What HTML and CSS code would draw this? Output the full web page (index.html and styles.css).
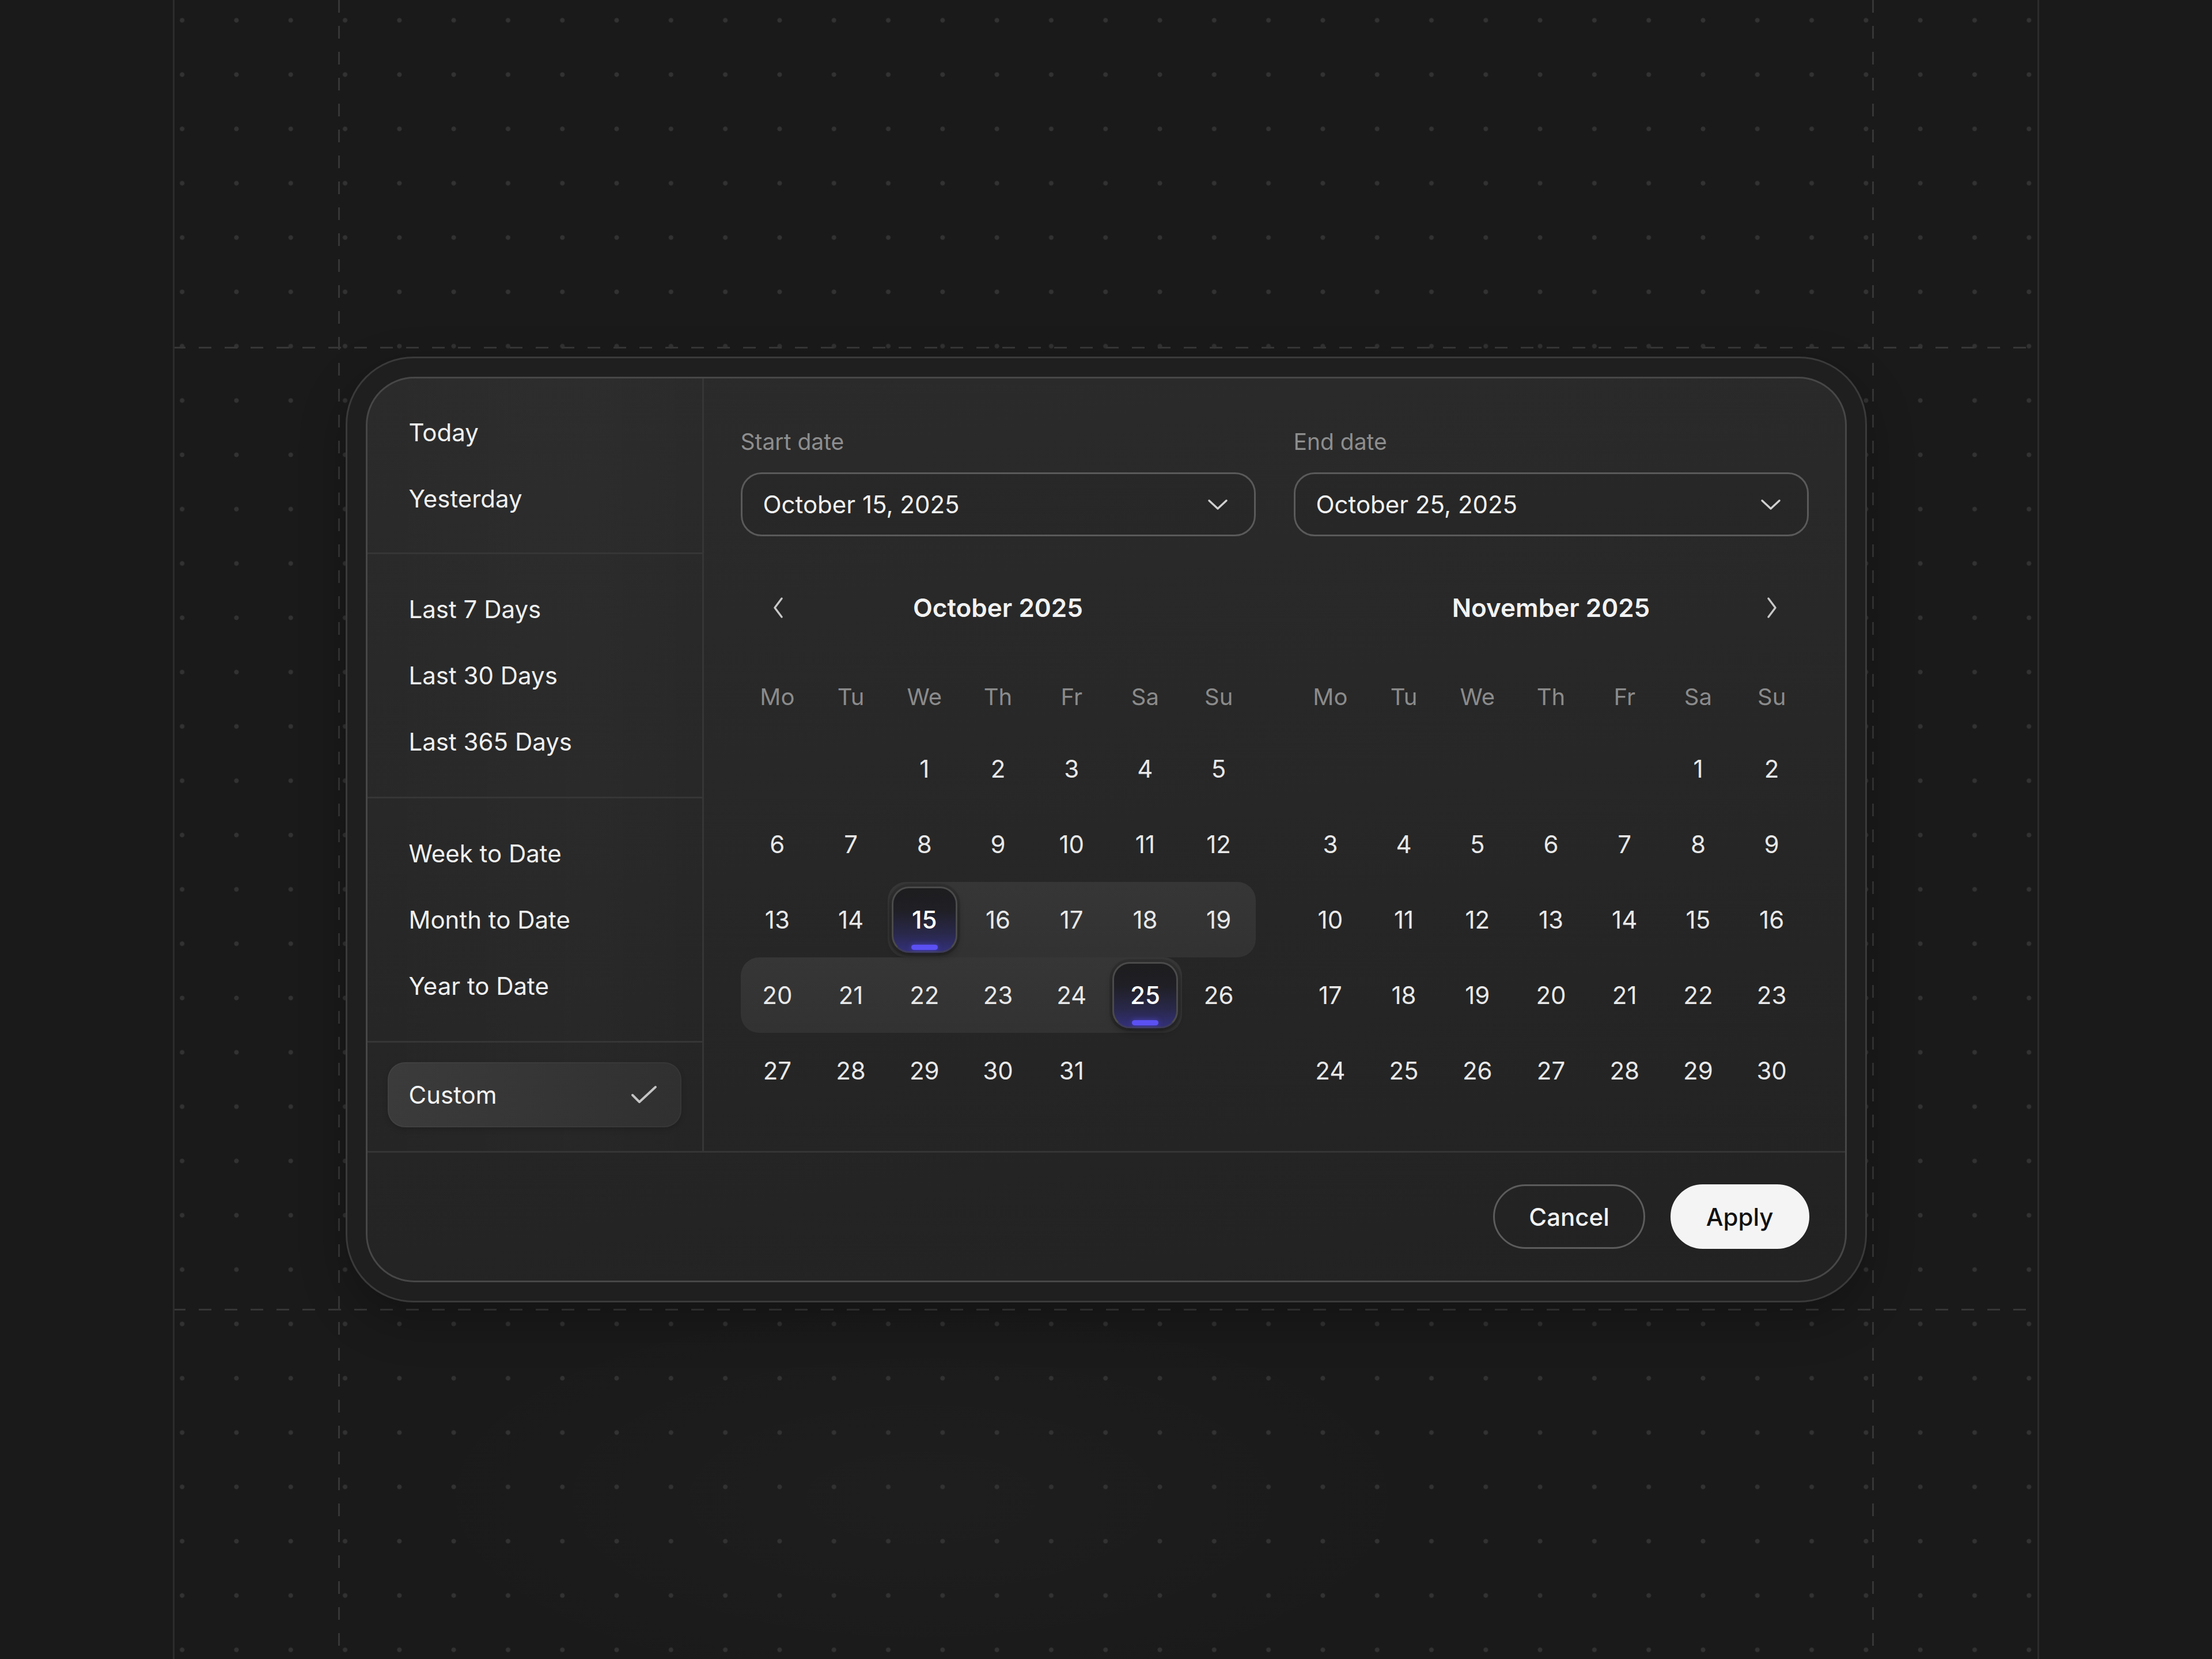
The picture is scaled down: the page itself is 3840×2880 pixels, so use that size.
FILE: index.html
```html
<!DOCTYPE html>
<html lang="en">
<head>
<meta charset="utf-8">
<title>Date range picker</title>
<link rel="stylesheet" href="styles.css">
</head>
<body>
<div class="page">
  <div class="canvas">
    <div class="shell">
      <div class="picker">
        <div class="picker-body">
          <aside class="presets">
            <div class="preset-group first-group">
              <div class="preset">Today</div>
              <div class="preset">Yesterday</div>
            </div>
            <div class="preset-group">
              <div class="preset">Last 7 Days</div>
              <div class="preset">Last 30 Days</div>
              <div class="preset">Last 365 Days</div>
            </div>
            <div class="preset-group">
              <div class="preset">Week to Date</div>
              <div class="preset">Month to Date</div>
              <div class="preset">Year to Date</div>
            </div>
            <div class="preset-group custom-group">
              <div class="custom">
                <span>Custom</span>
                <svg class="check" viewBox="0 0 46 32" width="46" height="32"><path d="M3 17 L15 29 L43 3"/></svg>
              </div>
            </div>
          </aside>

          <section class="range">
            <div class="month-col">
              <div class="field-label">Start date</div>
              <div class="field">
                <span>October 15, 2025</span>
                <svg class="caret" viewBox="0 0 36 20" width="36" height="20"><path d="M3 3 L18 17 L33 3"/></svg>
              </div>
              <div class="cal">
                <div class="cal-head">
                  <span class="nav"><svg viewBox="0 0 24 40" width="24" height="40"><path d="M18 4 L6 20 L18 36"/></svg></span>
                  <div class="cal-title">October 2025</div>
                </div>
                <div class="weekdays">
                  <span>Mo</span><span>Tu</span><span>We</span><span>Th</span><span>Fr</span><span>Sa</span><span>Su</span>
                </div>
                <div class="days">
                  <span class="d"></span><span class="d"></span><span class="d">1</span><span class="d">2</span><span class="d">3</span><span class="d">4</span><span class="d">5</span>
                  <span class="d">6</span><span class="d">7</span><span class="d">8</span><span class="d">9</span><span class="d">10</span><span class="d">11</span><span class="d">12</span>
                  <span class="d">13</span><span class="d">14</span><span class="d in first sel"><b>15<i></i></b></span><span class="d in">16</span><span class="d in">17</span><span class="d in">18</span><span class="d in last">19</span>
                  <span class="d in first">20</span><span class="d in">21</span><span class="d in">22</span><span class="d in">23</span><span class="d in">24</span><span class="d in last sel"><b>25<i></i></b></span><span class="d">26</span>
                  <span class="d">27</span><span class="d">28</span><span class="d">29</span><span class="d">30</span><span class="d">31</span><span class="d"></span><span class="d"></span>
                </div>
              </div>
            </div>

            <div class="month-col">
              <div class="field-label">End date</div>
              <div class="field">
                <span>October 25, 2025</span>
                <svg class="caret" viewBox="0 0 36 20" width="36" height="20"><path d="M3 3 L18 17 L33 3"/></svg>
              </div>
              <div class="cal">
                <div class="cal-head">
                  <div class="cal-title">November 2025</div>
                  <span class="nav next"><svg viewBox="0 0 24 40" width="24" height="40"><path d="M6 4 L18 20 L6 36"/></svg></span>
                </div>
                <div class="weekdays">
                  <span>Mo</span><span>Tu</span><span>We</span><span>Th</span><span>Fr</span><span>Sa</span><span>Su</span>
                </div>
                <div class="days">
                  <span class="d"></span><span class="d"></span><span class="d"></span><span class="d"></span><span class="d"></span><span class="d">1</span><span class="d">2</span>
                  <span class="d">3</span><span class="d">4</span><span class="d">5</span><span class="d">6</span><span class="d">7</span><span class="d">8</span><span class="d">9</span>
                  <span class="d">10</span><span class="d">11</span><span class="d">12</span><span class="d">13</span><span class="d">14</span><span class="d">15</span><span class="d">16</span>
                  <span class="d">17</span><span class="d">18</span><span class="d">19</span><span class="d">20</span><span class="d">21</span><span class="d">22</span><span class="d">23</span>
                  <span class="d">24</span><span class="d">25</span><span class="d">26</span><span class="d">27</span><span class="d">28</span><span class="d">29</span><span class="d">30</span>
                </div>
              </div>
            </div>
          </section>
        </div>

        <footer class="picker-foot">
          <button class="btn ghost">Cancel</button>
          <button class="btn solid">Apply</button>
        </footer>
      </div>
    </div>
  </div>
</div>
</body>
</html>
```

FILE: styles.css
```css
* {
  box-sizing: border-box;
  margin: 0;
  padding: 0;
}

html,
body {
  background: #1a1a1a;
}

body {
  font-family: Inter, "Noto Sans", "Liberation Sans", sans-serif;
  color: #ededed;
  -webkit-font-smoothing: antialiased;
}

.page {
  display: flex;
  justify-content: center;
  min-height: 2880px;
}

/* guide canvas between the two solid rules */
.canvas {
  width: 3240px;
  min-height: 2880px;
  border-left: 3px solid #2c2c2c;
  border-right: 3px solid #2c2c2c;
  display: flex;
  align-items: center;
  justify-content: center;
  background-origin: border-box;
  background-image:
    linear-gradient(to bottom, #363636 50%, transparent 50%),
    linear-gradient(to bottom, #363636 50%, transparent 50%),
    linear-gradient(to right, #363636 50%, transparent 50%),
    linear-gradient(to right, #363636 50%, transparent 50%),
    radial-gradient(circle, #323232 3.5px, transparent 4.5px),
    radial-gradient(ellipse 1300px 520px at 1300px 2600px, rgba(255, 255, 255, 0.018), transparent 70%);
  background-size:
    3px 45px,
    3px 45px,
    45px 3px,
    45px 3px,
    94.3px 94.3px,
    100% 100%;
  background-position:
    287px 0,
    2950px 0,
    0 602px,
    0 2272px,
    -31px -12px,
    0 0;
  background-repeat:
    repeat-y,
    repeat-y,
    repeat-x,
    repeat-x,
    repeat,
    no-repeat;
}

/* outer frame */
.shell {
  width: 2641px;
  height: 1642px;
  padding: 32px;
  border: 3px solid #3a3a3a;
  border-radius: 118px;
  background: #1f1f1f;
  box-shadow: 0 30px 80px rgba(0, 0, 0, 0.25);
}

.picker {
  height: 100%;
  display: flex;
  flex-direction: column;
  border: 3px solid #474747;
  border-radius: 84px;
  overflow: hidden;
  background: linear-gradient(172deg, #2b2b2b 0%, #282828 40%, #242424 80%, #222222 100%);
}

.picker-body {
  display: flex;
  flex: 1;
}

/* ---------- presets ---------- */
.presets {
  width: 584px;
  display: flex;
  flex-direction: column;
  border-right: 3px solid #363636;
  background: linear-gradient(90deg, rgba(255, 255, 255, 0) 0%, rgba(255, 255, 255, 0.012) 60%, rgba(255, 255, 255, 0) 100%);
}

.preset-group {
  padding: 38px 0;
  border-bottom: 3px solid #363636;
}

.preset-group.first-group {
  padding: 36px 0;
}

.preset {
  height: 115px;
  line-height: 115px;
  padding-left: 72px;
  font-size: 42px;
  color: #f0f0f0;
}

.custom-group {
  flex: 1;
  border-bottom: none;
  display: flex;
  align-items: center;
  padding: 0 36px 8px 35px;
}

.custom {
  width: 100%;
  height: 113px;
  display: flex;
  align-items: center;
  justify-content: space-between;
  padding: 0 42px 0 37px;
  border-radius: 30px;
  font-size: 42px;
  color: #f4f4f4;
  background: linear-gradient(90deg, #3b3b3b 0%, #353535 55%, #303030 100%);
  box-shadow: inset 0 0 0 2px rgba(255, 255, 255, 0.03), 0 4px 10px rgba(0, 0, 0, 0.15);
}

.check path {
  fill: none;
  stroke: #c4c4c4;
  stroke-width: 4;
  stroke-linecap: round;
  stroke-linejoin: round;
}

/* ---------- range / calendars ---------- */
.range {
  flex: 1;
  display: grid;
  grid-template-columns: 1fr 1fr;
  column-gap: 66px;
  padding: 86px 63px 0 64px;
}

.field-label {
  font-size: 39px;
  line-height: 48px;
  color: #8e8e8e;
  margin-bottom: 29px;
}

.field {
  height: 111px;
  display: flex;
  align-items: center;
  justify-content: space-between;
  padding: 0 45px 0 36px;
  border: 3px solid #5a5a5a;
  border-radius: 36px;
  font-size: 42px;
  color: #f2f2f2;
  background: rgba(0, 0, 0, 0.04);
}

.caret path {
  fill: none;
  stroke: #d0d0d0;
  stroke-width: 3.5;
  stroke-linecap: round;
  stroke-linejoin: round;
}

.cal-head {
  margin-top: 69px;
  height: 110px;
  display: grid;
  grid-template-columns: repeat(7, 1fr);
  align-items: center;
}

.cal-title {
  grid-column: 2 / 7;
  text-align: center;
  font-size: 44px;
  font-weight: 600;
  color: #f2f2f2;
}

.nav {
  display: flex;
  justify-content: center;
  align-items: center;
  padding-left: 4px;
}

.nav.next {
  grid-column: 7;
  padding-left: 0;
}

.nav path {
  fill: none;
  stroke: #c8c8c8;
  stroke-width: 3.5;
  stroke-linecap: round;
  stroke-linejoin: round;
}

.weekdays {
  margin-top: 40px;
  height: 119px;
  display: grid;
  grid-template-columns: repeat(7, 1fr);
  align-items: center;
  text-align: center;
  font-size: 40px;
  color: #8b8b8b;
}

.days {
  display: grid;
  grid-template-columns: repeat(7, 1fr);
  grid-auto-rows: 131px;
}

.d {
  display: flex;
  align-items: center;
  justify-content: center;
  font-size: 42px;
  color: #e8e8e8;
}

.d.in {
  background: linear-gradient(180deg, #363636 0%, #323232 100%);
}

.d.first {
  border-radius: 32px 0 0 32px;
}

.d.last {
  border-radius: 0 32px 32px 0;
}

.d.sel b {
  position: relative;
  width: 114px;
  height: 115px;
  display: flex;
  align-items: center;
  justify-content: center;
  font-weight: 500;
  color: #ffffff;
  border-radius: 30px;
  border: 3px solid #4a4a4a;
  border-bottom-color: #3d3b5a;
  background: linear-gradient(180deg, #1d1d1f 0%, #1f1f25 35%, #29284a 72%, #333078 100%);
  box-shadow: 0 0 0 5px rgba(0, 0, 0, 0.12), 0 6px 12px rgba(0, 0, 0, 0.3);
}

.d.sel i {
  position: absolute;
  left: 50%;
  bottom: 2px;
  width: 46px;
  height: 9px;
  margin-left: -23px;
  border-radius: 5px;
  background: #5b50f2;
  box-shadow: 0 0 10px rgba(91, 80, 242, 0.6);
}

/* ---------- footer ---------- */
.picker-foot {
  height: 225px;
  border-top: 3px solid #353535;
  display: flex;
  align-items: center;
  justify-content: flex-end;
  gap: 44px;
  padding-right: 62px;
}

.btn {
  height: 112px;
  padding: 0 59px;
  border-radius: 56px;
  font-family: Inter, "Noto Sans", "Liberation Sans", sans-serif;
  font-size: 42px;
  font-weight: 500;
  cursor: pointer;
}

.btn.ghost {
  background: transparent;
  color: #f2f2f2;
  border: 3px solid #5c5c5c;
}

.btn.solid {
  background: #f4f4f4;
  color: #111111;
  border: 3px solid #f4f4f4;
}
```
